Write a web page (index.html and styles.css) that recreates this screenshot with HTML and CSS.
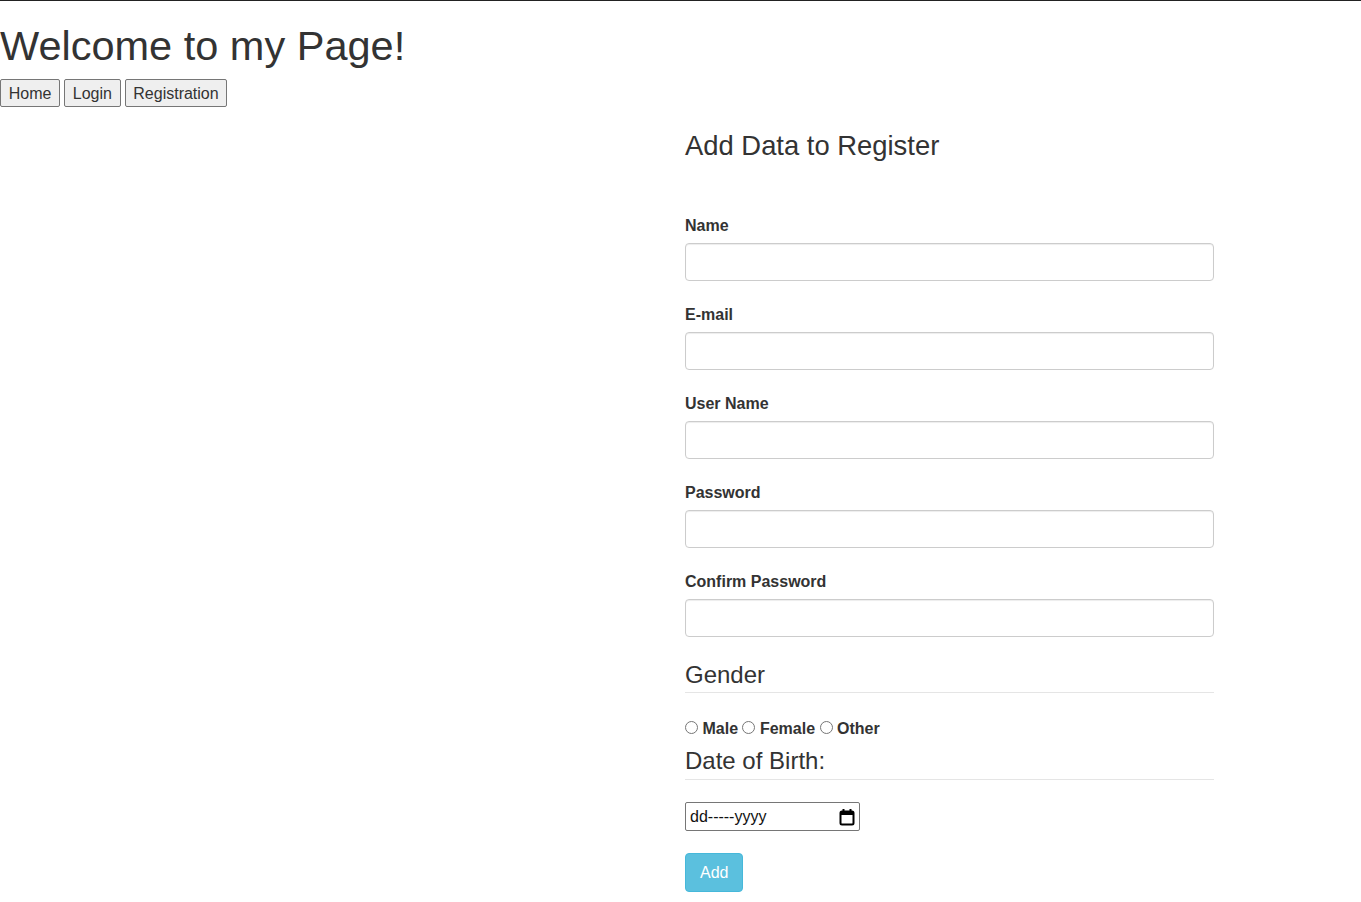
FILE: index.html
```html
<!DOCTYPE html>
<html lang="en">
<head>
<meta charset="utf-8">
<title>Welcome to my Page!</title>
<link rel="stylesheet" href="styles.css">
</head>
<body>
<header class="site-header">
  <h1 class="site-title">Welcome to my Page!</h1>
  <nav class="site-nav">
    <button class="nav-btn" type="button">Home</button>
    <button class="nav-btn" type="button">Login</button>
    <button class="nav-btn" type="button">Registration</button>
  </nav>
</header>
<main class="layout">
  <div class="layout-spacer"></div>
  <section class="form-col">
    <h3 class="form-title">Add Data to Register</h3>
    <form class="reg-form">
      <div class="form-group">
        <label class="field-label" for="name">Name</label>
        <input class="form-control" id="name" type="text">
      </div>
      <div class="form-group">
        <label class="field-label" for="email">E-mail</label>
        <input class="form-control" id="email" type="text">
      </div>
      <div class="form-group">
        <label class="field-label" for="uname">User Name</label>
        <input class="form-control" id="uname" type="text">
      </div>
      <div class="form-group">
        <label class="field-label" for="pw">Password</label>
        <input class="form-control" id="pw" type="password">
      </div>
      <div class="form-group">
        <label class="field-label" for="cpw">Confirm Password</label>
        <input class="form-control" id="cpw" type="password">
      </div>
      <div class="legend legend-gender">Gender</div>
      <div class="radio-row">
        <input class="radio" type="radio" name="g" id="gm"> <label class="radio-label" for="gm">Male</label>
        <input class="radio" type="radio" name="g" id="gf"> <label class="radio-label" for="gf">Female</label>
        <input class="radio" type="radio" name="g" id="go"> <label class="radio-label" for="go">Other</label>
      </div>
      <div class="legend legend-dob">Date of Birth:</div>
      <div class="date-input">
        <span class="date-text">dd-----yyyy</span>
        <svg class="cal-icon" width="16" height="18" viewBox="0 0 16 18" aria-hidden="true">
          <rect x="1.5" y="3.5" width="13" height="13" rx="1.5" fill="none" stroke="#000" stroke-width="2"/>
          <rect x="1.5" y="3.5" width="13" height="3.5" fill="#000"/>
          <rect x="3.5" y="1" width="2" height="3" fill="#000"/>
          <rect x="10.5" y="1" width="2" height="3" fill="#000"/>
        </svg>
      </div>
      <button class="btn-add" type="button">Add</button>
    </form>
  </section>
</main>
</body>
</html>
```
FILE: styles.css
```css
html, body {
  margin: 0;
  padding: 0;
  background: #fff;
}
body {
  border-top: 1px solid #222;
  font-family: "Liberation Sans", Arial, Helvetica, sans-serif;
  font-size: 16px;
  line-height: 23px;
  color: #333;
}
.site-title {
  margin: 22px 0 0;
  font-size: 41.5px;
  line-height: 45px;
  font-weight: 400;
  color: #333;
}
.site-nav {
  display: flex;
  gap: 4px;
  margin-top: 11px;
}
.nav-btn {
  font-family: "Liberation Sans", Arial, sans-serif;
  font-size: 16px;
  line-height: 22px;
  padding: 3px 7.7px 1px;
  border: 1px solid #767676;
  border-radius: 2px;
  background: #efefef;
  color: #333;
  margin: 0;
}
.layout {
  display: grid;
  grid-template-columns: 685px 529px;
}
.form-title {
  margin: 24px 0 53px;
  font-size: 27.4px;
  line-height: 30px;
  font-weight: 400;
  color: #333;
}
.reg-form {
  display: flex;
  flex-direction: column;
  align-items: flex-start;
}
.form-group {
  align-self: stretch;
  margin-bottom: 22px;
}
.field-label {
  display: block;
  font-weight: 700;
  line-height: 23px;
  margin-bottom: 6px;
}
.form-control {
  display: block;
  box-sizing: border-box;
  width: 100%;
  height: 38px;
  margin: 0;
  border: 1px solid #ccc;
  border-radius: 4px;
  box-shadow: inset 0 1px 1px rgba(0,0,0,.075);
  background: #fff;
  padding: 7px 14px;
  font: inherit;
}
.legend {
  align-self: stretch;
  font-size: 24px;
  line-height: 23px;
  padding-bottom: 6px;
  border-bottom: 1px solid #e5e5e5;
  color: #333;
}
.legend-gender {
  margin-top: 4px;
  margin-bottom: 24px;
}
.legend-dob {
  margin-top: 9px;
  padding-bottom: 7px;
  margin-bottom: 22px;
}
.radio-row {
  line-height: 23px;
  font-weight: 700;
}
.radio {
  margin: 0;
  width: 13px;
  height: 13px;
  vertical-align: baseline;
}
.date-input {
  box-sizing: border-box;
  width: 175px;
  height: 29px;
  border: 1px solid #767676;
  border-radius: 2px;
  display: flex;
  align-items: center;
  justify-content: space-between;
  padding: 0 4px 0 4px;
  color: #111;
  font-size: 16px;
}
.cal-icon {
  display: block;
}
.btn-add {
  margin-top: 22px;
  font-family: "Liberation Sans", Arial, sans-serif;
  font-size: 16px;
  line-height: 23px;
  padding: 7px 14px;
  border: 1px solid #46b8da;
  border-radius: 4px;
  background: #5bc0de;
  color: #fff;
}
```
